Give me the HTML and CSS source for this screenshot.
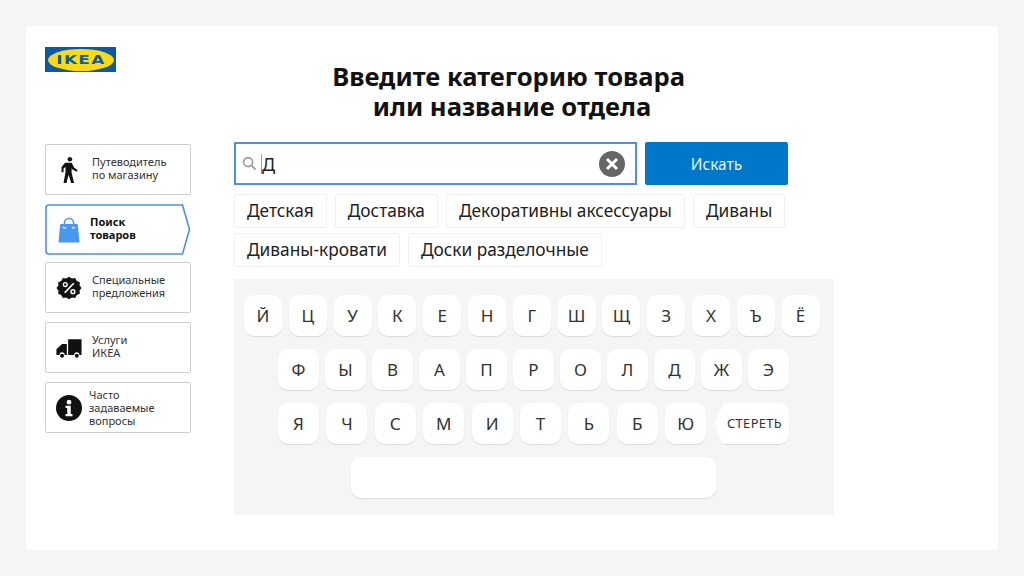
FILE: index.html
```html
<!DOCTYPE html>
<html lang="ru">

<head>
    <meta charset="UTF-8">
    <meta name="viewport" content="width=device-width, initial-scale=1.0">
    <title>Поиск товаров</title>
    <link rel="stylesheet" href="styles.css">
</head>

<body>
    <div class="screen">
        <div class="logo"><div class="logo-oval"><span>IKEA</span></div></div>
        <h1 class="title">Введите категорию товара&nbsp;<br>или название отдела</h1>

        <div class="columns">
            <!-- Меню -->
            <nav class="menu">
                <a class="menu-item">
                    <svg class="menu-icon" viewBox="0 0 30 30">
                        <circle cx="16" cy="2.600" r="2.600" fill="#111" />
                        <path d="M10.500 6.500h7.500l3 6 4 2.500-1 2-5-2.500-1-1.500v5l2.800 12h-3.300l-3-9.500-2.500 9.500h-3.300l2.300-12.500v-6l-2.300 1.800v4.200h-2.300v-6z" fill="#111" />
                    </svg>
                    <span>Путеводитель<br>по магазину</span>
                </a>
                <a class="menu-item menu-item-active">
                    <svg class="active-shape" viewBox="0 0 146 52" preserveAspectRatio="none">
                        <path d="M4 1h133.500l7 25-7 25H4a3 3 0 0 1-3-3V4a3 3 0 0 1 3-3z" fill="#fff" stroke="#4a90e8" stroke-width="1.600" />
                    </svg>
                    <svg class="menu-icon menu-icon-bag" viewBox="0 0 24 28">
                        <path d="M2.500 7.500h19L23.500 27.500H.5z" fill="#4a97f0" />
                        <path d="M7 11V6.500a5 5 0 0 1 10 0V11" fill="none" stroke="#4a97f0" stroke-width="1.700" />
                        <path d="M5.500 10.500a1.500 1.500 0 0 0 3 0M15.500 10.500a1.500 1.500 0 0 0 3 0" fill="none" stroke="#fff" stroke-width="1.100" />
                    </svg>
                    <span>Поиск<br>товаров</span>
                </a>
                <a class="menu-item">
                    <svg class="menu-icon" viewBox="0 0 30 30">
                        <path d="M15 2l3.300 2 3.800-.500 1.900 3.300 3.500 1.500-.300 3.800L29.500 15l-2.300 2.900.300 3.800-3.500 1.500-1.900 3.300-3.800-.500L15 28l-3.300-2-3.800.500L6 23.200l-3.500-1.500.300-3.800L.500 15l2.300-2.900-.300-3.800L6 6.800l1.900-3.300 3.800.500z" fill="#111" />
                        <path d="M10 20.500L20.500 9.500" stroke="#fff" stroke-width="1.900" />
                        <circle cx="10.700" cy="11" r="2.200" fill="none" stroke="#fff" stroke-width="1.600" />
                        <circle cx="19.500" cy="19.200" r="2.200" fill="none" stroke="#fff" stroke-width="1.600" />
                    </svg>
                    <span>Специальные<br>предложения</span>
                </a>
                <a class="menu-item">
                    <svg class="menu-icon" viewBox="0 0 30 30">
                        <path d="M14 5h15.500v18h-2.500a3 3 0 0 0-6 0H14z" fill="#111" />
                        <path d="M7 10.500h5.500V23H10a3 3 0 0 0-6 0H.5v-6.500z" fill="#111" />
                        <circle cx="7" cy="24" r="2.300" fill="#111" />
                        <circle cx="24" cy="24" r="2.300" fill="#111" />
                    </svg>
                    <span>Услуги<br>ИКЕА</span>
                </a>
                <a class="menu-item menu-item-long">
                    <svg class="menu-icon" viewBox="0 0 30 30">
                        <circle cx="15" cy="15" r="15" fill="#111" />
                        <circle cx="15" cy="8.300" r="2.700" fill="#fff" />
                        <path d="M11 12.500h6v9.500h2v2.500h-8V22h2v-7h-2z" fill="#fff" />
                    </svg>
                    <span>Часто<br>задаваемые<br>вопросы</span>
                </a>
            </nav>

            <main class="content">
                <div class="search-row">
                    <div class="search-box">
                        <svg class="search-icon" viewBox="0 0 16 16">
                            <circle cx="6.500" cy="6.500" r="4.800" fill="none" stroke="#9a9a9a" stroke-width="1.700" />
                            <path d="M10 10l4.500 4.500" stroke="#9a9a9a" stroke-width="1.900" />
                        </svg>
                        <span class="caret"></span>
                        <span class="search-text">Д</span>
                        <svg class="clear-icon" viewBox="0 0 26 26">
                            <circle cx="13" cy="13" r="13" fill="#666" />
                            <path d="M8 8l10 10M18 8L8 18" stroke="#fff" stroke-width="3" />
                        </svg>
                    </div>
                    <button class="search-btn">Искать</button>
                </div>

                <div class="chips">
                    <span class="chip">Детская</span>
                    <span class="chip">Доставка</span>
                    <span class="chip">Декоративны аксессуары</span>
                    <span class="chip">Диваны</span>
                    <span class="chip">Диваны-кровати</span>
                    <span class="chip">Доски разделочные</span>
                </div>

                <div class="keyboard">
                    <div class="key-row key-row-1">
                        <span class="key">Й</span><span class="key">Ц</span><span class="key">У</span><span class="key">К</span><span class="key">Е</span><span class="key">Н</span><span class="key">Г</span><span class="key">Ш</span><span class="key">Щ</span><span class="key">З</span><span class="key">Х</span><span class="key">Ъ</span><span class="key">Ё</span>
                    </div>
                    <div class="key-row key-row-2">
                        <span class="key">Ф</span><span class="key">Ы</span><span class="key">В</span><span class="key">А</span><span class="key">П</span><span class="key">Р</span><span class="key">О</span><span class="key">Л</span><span class="key">Д</span><span class="key">Ж</span><span class="key">Э</span>
                    </div>
                    <div class="key-row key-row-3">
                        <span class="key">Я</span><span class="key">Ч</span><span class="key">С</span><span class="key">М</span><span class="key">И</span><span class="key">Т</span><span class="key">Ь</span><span class="key">Б</span><span class="key">Ю</span>
                        <span class="key key-delete">СТЕРЕТЬ</span>
                    </div>
                    <div class="key-row key-row-4">
                        <span class="key key-space"></span>
                    </div>
                </div>
            </main>
        </div>
    </div>
</body>

</html>
```

FILE: styles.css
```css
body {
    margin: 0;
    background-color: #f5f5f5;
    font-family: "Noto Sans", "Open Sans", sans-serif;
    color: #111;
}

.screen {
    width: 934px;
    height: 484px;
    margin: 26px;
    padding: 21px 19px 19px;
    background-color: #fff;
    position: relative;
}

.logo {
    width: 71px;
    height: 25px;
    background-color: #0a5aa8;
    display: flex;
    align-items: center;
    justify-content: center;
    position: absolute;
    left: 19px;
    top: 21px;
}

.logo-oval {
    width: 66px;
    height: 22px;
    border-radius: 50%;
    background-color: #fbd914;
    display: flex;
    align-items: center;
    justify-content: center;
}

.logo-oval span {
    color: #0a5aa8;
    font-family: "DejaVu Sans", sans-serif;
    font-weight: bold;
    font-size: 13px;
    line-height: 22px;
    letter-spacing: 1px;
    transform: scaleX(1.3);
}

.title {
    margin: 15px 0 20px 0;
    text-align: center;
    font-size: 25.6px;
    line-height: 30px;
    font-weight: 700;
    color: #111;
}

.columns {
    display: flex;
    gap: 43px;
}

/* Меню слева */
.menu {
    width: 146px;
    display: flex;
    flex-direction: column;
    gap: 9px;
    padding-top: 2px;
}

.menu-item {
    height: 49px;
    width: 134px;
    border: 1px solid #cfcfcf;
    border-radius: 2px;
    display: flex;
    align-items: center;
    padding-left: 10px;
    font-size: 11px;
    line-height: 13px;
    color: #333;
    position: relative;
}

.menu-item span {
    margin: -3px 0 0 10px;
    position: relative;
}

.menu-item-active {
    border-color: transparent;
    font-weight: 700;
    color: #111;
    margin-bottom: -2px;
}

.menu-item-active span {
    margin-left: 10px;
}

.menu-item-long span {
    margin: 0 0 0 7px;
}

.active-shape {
    position: absolute;
    left: -1px;
    top: -1px;
    width: 146px;
    height: 51px;
}

.menu-icon {
    width: 26px;
    height: 26px;
    flex-shrink: 0;
    position: relative;
}

.menu-icon-bag {
    width: 22px;
    height: 26px;
    margin-left: 2px;
}

/* Busca */
.content {
    width: 600px;
}

.search-row {
    display: flex;
    gap: 8px;
}

.search-box {
    width: 403px;
    height: 43px;
    box-sizing: border-box;
    border: 2px solid #4a90e8;
    display: flex;
    align-items: center;
    padding: 0 10px 0 6px;
}

.search-icon {
    width: 15px;
    height: 15px;
    margin-right: 4px;
}

.caret {
    width: 1px;
    height: 20px;
    background-color: #7da7dc;
}

.search-text {
    flex: 1;
    font-size: 18px;
    color: #222;
}

.clear-icon {
    width: 26px;
    height: 26px;
}

.search-btn {
    width: 143px;
    height: 43px;
    border: none;
    border-radius: 2px;
    background-color: #0077c8;
    color: #e4f1fb;
    font-family: inherit;
    font-size: 15.5px;
}

.chips {
    display: flex;
    flex-wrap: wrap;
    gap: 5px 8px;
    width: 560px;
    margin-top: 9px;
}

.chip {
    height: 32px;
    line-height: 32px;
    padding: 0 12px;
    border: 1px solid #f0f0f0;
    border-radius: 2px;
    font-size: 17.3px;
    color: #222;
}

.keyboard {
    height: 236px;
    margin-top: 12px;
    padding-top: 16px;
    box-sizing: border-box;
    background-color: #f5f5f5;
    border-radius: 2px;
}

.key-row {
    display: flex;
    margin-bottom: 13px;
}

.key-row-1 {
    padding-left: 10px;
    gap: 6.800px;
}

.key-row-2 {
    padding-left: 44px;
    gap: 6px;
}

.key-row-3 {
    padding-left: 44px;
    gap: 7.400px;
}

.key-row-4 {
    padding-left: 117px;
}

.key {
    width: 38px;
    height: 41px;
    line-height: 41px;
    text-align: center;
    background-color: #fff;
    border-radius: 10px;
    box-shadow: 0 1px 1px #dcdcdc;
    font-size: 17px;
    color: #333;
}

.key-row-2 .key,
.key-row-3 .key {
    width: 41px;
}

.key-row-3 .key-delete {
    width: 74px;
    margin-left: 1px;
    font-size: 13px;
    letter-spacing: 0.3px;
    clip-path: polygon(0 45%, 10px 0, 100% 0, calc(100% + 2px) 100%, 100% calc(100% + 2px), 10px calc(100% + 2px), 4px 75%);
    border-radius: 0 10px 10px 0;
    padding-left: 6px;
    box-sizing: border-box;
}

.key-row-4 .key-space {
    width: 365px;
}
```
